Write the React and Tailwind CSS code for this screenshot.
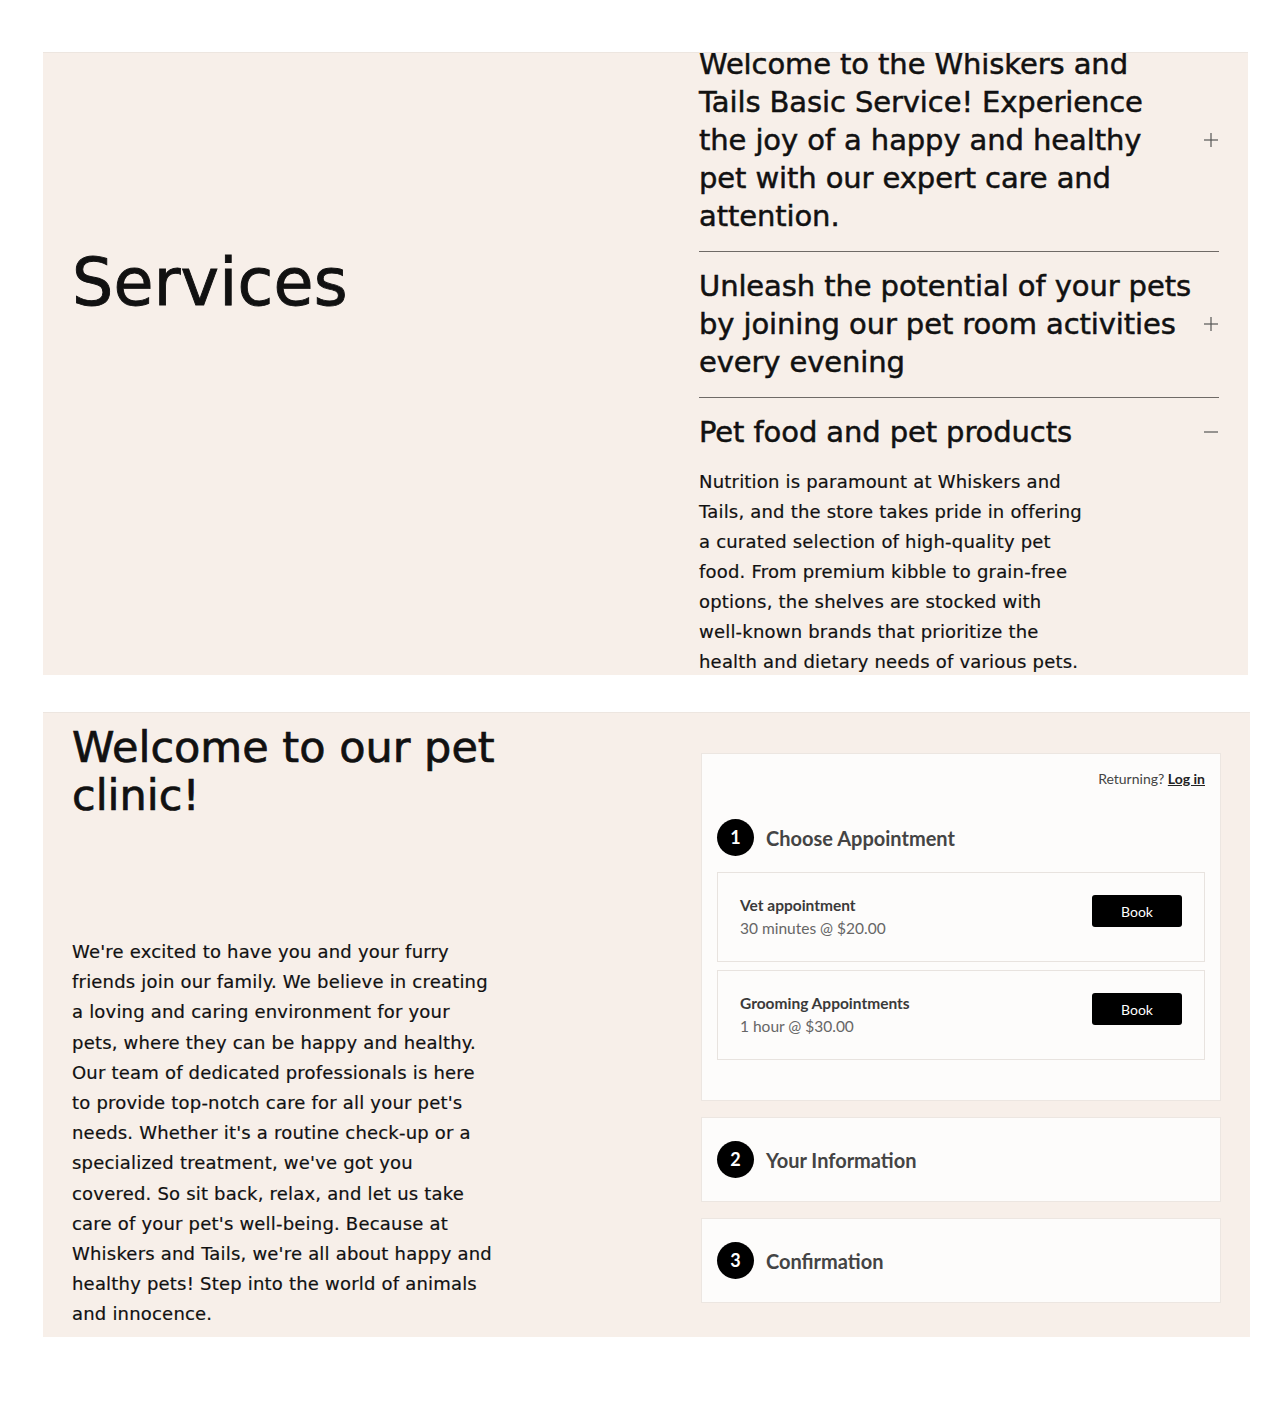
import React, { useState } from 'react';

const geo = { fontFamily: '"DejaVu Sans", sans-serif' };
const src = { fontFamily: 'Lato, "Noto Sans", sans-serif' };

const services = [
  {
    title:
      'Welcome to the Whiskers and Tails Basic Service! Experience the joy of a happy and healthy pet with our expert care and attention.',
    body: '',
  },
  {
    title: 'Unleash the potential of your pets by joining our pet room activities every evening',
    body: '',
  },
  {
    title: 'Pet food and pet products',
    body:
      'Nutrition is paramount at Whiskers and Tails, and the store takes pride in offering a curated selection of high-quality pet food. From premium kibble to grain-free options, the shelves are stocked with well-known brands that prioritize the health and dietary needs of various pets.',
  },
];

const appointments = [
  { name: 'Vet appointment', detail: '30 minutes @ $20.00' },
  { name: 'Grooming Appointments', detail: '1 hour @ $30.00' },
];

const ToggleIcon = ({ open }) => (
  <svg width="16" height="16" viewBox="0 0 16 16" className="shrink-0 text-[#555]">
    <line x1="1" y1="8" x2="15" y2="8" stroke="currentColor" strokeWidth="1.2" />
    {!open && <line x1="8" y1="1" x2="8" y2="15" stroke="currentColor" strokeWidth="1.2" />}
  </svg>
);

const StepBadge = ({ n }) => (
  <div className="w-[37px] h-[37px] rounded-full bg-black text-white flex items-center justify-center text-[18px] font-bold shrink-0">
    {n}
  </div>
);

const App = () => {
  const [openIdx, setOpenIdx] = useState(2);

  return (
    <div className="min-h-[1420px] bg-white pt-[52px]" style={geo}>
      {/* Services panel */}
      <section className="ml-[43px] mr-[34px] h-[623px] bg-[#f7efe9] border-t border-[#ede6e0] flex overflow-hidden text-[#111]">
        <div className="w-[656px] pl-[29px] pt-[197px]">
          <h2 className="text-[65px] leading-none font-normal tracking-[0.2px] [-webkit-text-stroke:0.9px]">Services</h2>
        </div>
        <div className="w-[520px] -mt-[8px]">
          {services.map((s, i) => {
            const open = openIdx === i;
            const last = i === services.length - 1;
            return (
              <div key={i} className={`${i === 0 ? '' : 'pt-[15px]'} ${last ? '' : 'pb-[16px] border-b border-[#6f6a66]'}`}>
                <button
                  onClick={() => setOpenIdx(open ? -1 : i)}
                  className="w-full flex items-center justify-between text-left cursor-pointer"
                >
                  <span className="w-[495px] text-[29px] leading-[38px] tracking-[-0.1px] [-webkit-text-stroke:0.5px]">
                    {s.title}
                  </span>
                  <ToggleIcon open={open} />
                </button>
                {open && s.body && (
                  <p className="mt-[16px] w-[390px] text-[18px] leading-[30px] tracking-[0.2px] [-webkit-text-stroke:0.2px]">
                    {s.body}
                  </p>
                )}
              </div>
            );
          })}
        </div>
      </section>

      {/* Clinic + booking panel */}
      <section className="mt-[37px] ml-[43px] mr-[32px] h-[625px] bg-[#f7efe9] border-t border-[#ede6e0] flex overflow-hidden text-[#111]">
        <div className="w-[658px] pl-[29px] pt-[10px] flex flex-col">
          <h1 className="text-[43px] leading-[48px] font-normal w-[470px] [-webkit-text-stroke:0.7px]">
            Welcome to our pet clinic!
          </h1>
          <p className="mt-[118px] w-[425px] text-[18px] leading-[30.2px] tracking-[0.2px] [-webkit-text-stroke:0.2px]">
            We're excited to have you and your furry friends join our family. We believe in creating a loving and
            caring environment for your pets, where they can be happy and healthy. Our team of dedicated
            professionals is here to provide top-notch care for all your pet's needs. Whether it's a routine
            check-up or a specialized treatment, we've got you covered. So sit back, relax, and let us take care of
            your pet's well-being. Because at Whiskers and Tails, we're all about happy and healthy pets! Step into
            the world of animals and innocence.
          </p>
        </div>

        <div className="w-[520px] pt-[40px] flex flex-col gap-[16px]" style={src}>
          <div className="bg-[#fdfcfb] border border-[#ece6e1] px-[15px] pt-[15px] pb-[40px]">
            <div className="text-right text-[14px] leading-[20px] text-[#444]">
              Returning? <a className="underline text-[#222] font-bold">Log in</a>
            </div>
            <div className="mt-[30px] flex items-center gap-[12px]">
              <StepBadge n={1} />
              <h3 className="text-[20px] font-bold text-[#444]">Choose Appointment</h3>
            </div>
            <div className="mt-[16px] flex flex-col gap-[8px]">
              {appointments.map((a) => (
                <div
                  key={a.name}
                  className="h-[90px] border border-[#e8e3df] bg-[#fdfcfb] px-[22px] py-[21px] flex items-start justify-between"
                >
                  <div className="text-[15.5px] leading-[23px]">
                    <div className="font-bold text-[#3a3a3a]">{a.name}</div>
                    <div className="text-[#666]">{a.detail}</div>
                  </div>
                  <button className="mt-[1px] w-[90px] h-[32px] bg-black text-white text-[14px] rounded-[3px]">
                    Book
                  </button>
                </div>
              ))}
            </div>
          </div>

          {['Your Information', 'Confirmation'].map((label, i) => (
            <div
              key={label}
              className="h-[85px] bg-[#fdfcfb] border border-[#ece6e1] px-[15px] flex items-center gap-[12px]"
            >
              <StepBadge n={i + 2} />
              <h3 className="text-[20px] font-bold text-[#444]">{label}</h3>
            </div>
          ))}
        </div>
      </section>
    </div>
  );
};

export default App;
